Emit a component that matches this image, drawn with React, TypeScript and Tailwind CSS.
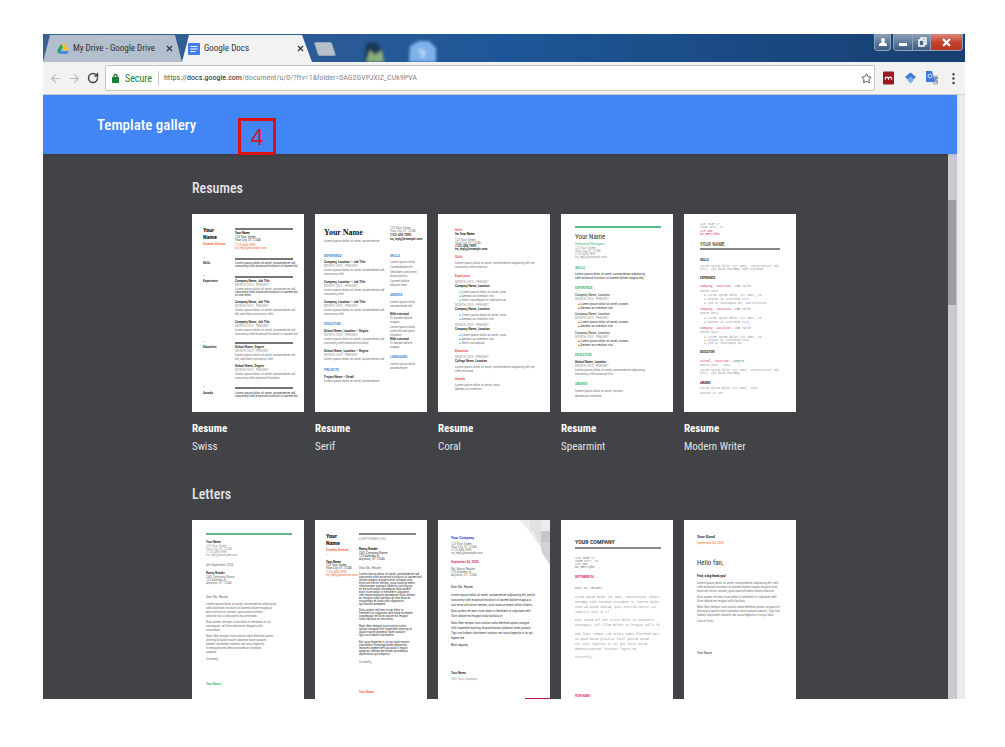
import React from 'react';
import { ArrowLeft, ArrowRight, MoreVertical, RotateCw, Star, X } from 'lucide-react';

interface Block {
  x: number;
  y: number;
  lines: string[];
  step?: number;
  size?: number;
  fill?: string;
  bold?: boolean;
  italic?: boolean;
  font?: string;
}

interface Rule {
  x: number;
  y: number;
  w: number;
  h?: number;
  fill: string;
}

interface Template {
  id: string;
  title?: string;
  style?: string;
  font?: string;
  rules?: Rule[];
  blocks: Block[];
  corner?: boolean;
}

const BODY = 'Roboto, sans-serif';
const TITLE = "'Roboto Condensed', Roboto, sans-serif";
const SERIF = "'Liberation Serif', serif";
const MONO = "'Liberation Mono', monospace";

const ORANGE = '#f4693c';
const BLUE = '#3f87d0';
const RED = '#f0575c';
const GREEN = '#3cba6e';
const PINK = '#e0336a';
const DARK = '#333333';
const GREY = '#707070';
const LIGHT = '#949494';

const ADDRESS = ['123 Your Street', 'Your City, ST 12345', '(123) 456-7890', 'no_reply@example.com'];
const READER = ['CEO, Company Name', '123 Address St', 'Anytown, ST 12345'];
const LOREM = 'Lorem ipsum dolor sit amet, consectetuer adi';
const LOREM_2 = 'nonummy nibh euismod tincidunt ut laoreet dol';
const LOREM_WIDE = 'Lorem ipsum dolor sit amet, consectetuer adipiscing elit, sed diam';
const LOREM_WIDE_2 = 'nibh euismod tincidunt ut laoreet dolore magna aliq';

const head = (x: number, y: number, text: string, fill: string): Block => ({ x, y, lines: [text], fill, bold: true });
const text = (x: number, y: number, lines: string[], fill = GREY, step = 4): Block => ({ x, y, lines, fill, step });
const bullets = (x: number, y: number, lines: string[], fill = GREY): Block => ({
  x,
  y,
  lines: lines.map((l) => '●  ' + l),
  fill,
});

const job = (x: number, y: number, title: string, body: string[]): Block[] => [
  head(x, y, title, DARK),
  text(x, y + 4, ['MONTH 20XX - PRESENT'], LIGHT),
  text(x, y + 8, body),
];

const datedJob = (x: number, y: number, title: string): Block[] => [
  text(x, y, ['MONTH 20XX - PRESENT'], LIGHT),
  head(x, y + 4, title, DARK),
];

const resumes: Template[] = [
  {
    id: 'resume-swiss',
    title: 'Resume',
    style: 'Swiss',
    rules: [14, 44, 62, 128, 173].map((y) => ({ x: 43, y, w: 58, h: 2, fill: '#777777' })),
    blocks: [
      { x: 11, y: 18, lines: ['Your', 'Name'], size: 6, step: 7, bold: true, fill: '#111111', font: TITLE },
      head(11, 31, 'Creative Director', ORANGE),
      head(43, 20, 'Your Name', '#111111'),
      text(43, 24, ADDRESS.slice(0, 2), DARK, 3),
      text(43, 32, ADDRESS.slice(2), ORANGE, 3),
      text(11, 45, ['—'], GREY),
      head(11, 50, 'Skills', DARK),
      text(43, 50, [LOREM, LOREM_2], DARK, 3),
      text(11, 63, ['—'], GREY),
      head(11, 68, 'Experience', DARK),
      ...job(43, 68, 'Company Name, Job Title', [LOREM]),
      text(43, 79, [LOREM_2, 'ut wisi enim'], DARK, 3),
      ...job(43, 89, 'Company Name, Job Title', [LOREM, 'elit, sed diam nonummy nibh']),
      ...job(43, 109, 'Company Name, Job Title', [LOREM, LOREM_2]),
      text(11, 129, ['—'], GREY),
      head(11, 134, 'Education', DARK),
      ...job(43, 134, 'School Name, Degree', [LOREM, 'elit, sed diam nonummy nibh']),
      ...job(43, 153, 'School Name, Degree', [LOREM, 'nonummy nibh euismod tincidunt']),
      text(11, 174, ['—'], GREY),
      head(11, 180, 'Awards', DARK),
      text(43, 180, [LOREM, LOREM_2], DARK, 3),
    ],
  },
  {
    id: 'resume-serif',
    title: 'Resume',
    style: 'Serif',
    blocks: [
      { x: 9, y: 21, lines: ['Your Name'], size: 8, bold: true, font: SERIF, fill: '#111111' },
      text(9, 28, ['Lorem ipsum dolor sit amet, consectetuer'], GREY),
      text(75, 15, ADDRESS.slice(0, 2), GREY, 3),
      { x: 75, y: 22, lines: ['(123) 456-7890', 'no_reply@example.com'], step: 4, bold: true, fill: DARK },
      head(9, 43, 'EXPERIENCE', BLUE),
      ...job(9, 49, 'Company, Location — Job Title', [LOREM, 'nonummy nibh']),
      ...job(9, 69, 'Company, Location — Job Title', [LOREM, 'nonummy nibh']),
      ...job(9, 89, 'Company, Location — Job Title', [LOREM, 'nonummy nibh']),
      head(9, 111, 'EDUCATION', BLUE),
      ...job(9, 118, 'School Name, Location — Degree', [LOREM, 'nonummy nibh euismod tincidunt']),
      ...job(9, 138, 'School Name, Location — Degree', [LOREM]),
      head(9, 157, 'PROJECTS', BLUE),
      head(9, 164, 'Project Name — Detail', DARK),
      text(9, 168, ['Lorem ipsum dolor sit amet, consectetuer']),
      head(75, 43, 'SKILLS', BLUE),
      text(75, 49, ['Lorem ipsum dolor']),
      text(75, 54, ['Consectetuer elit']),
      text(75, 59, ['Sed diam nonummy', 'euismod tinc']),
      text(75, 68, ['Laoreet dolore', 'aliquam erat']),
      head(75, 82, 'AWARDS', BLUE),
      text(75, 89, ['Lorem ipsum dolor', 'consectetuer elit']),
      head(75, 101, 'Nibh euismod', DARK),
      text(75, 105, ['Ut laoreet dolore', 'magna']),
      text(75, 114, ['Lorem ipsum dolor', 'amet elit sed diam', 'tincidunt']),
      head(75, 126, 'Nibh euismod', DARK),
      text(75, 130, ['Ut laoreet dolore', 'magna']),
      head(75, 144, 'LANGUAGES', BLUE),
      text(75, 151, ['Lorem ipsum dolor', 'consectetuer']),
    ],
  },
  {
    id: 'resume-coral',
    title: 'Resume',
    style: 'Coral',
    blocks: [
      head(17, 17, 'Hello', RED),
      { x: 17, y: 21, lines: ["I'm Your Name"], bold: true, fill: '#111111' },
      text(17, 27, ADDRESS.slice(0, 2), GREY, 3),
      { x: 17, y: 33, lines: ADDRESS.slice(2), step: 3, bold: true, fill: DARK },
      head(17, 44, 'Skills', RED),
      text(17, 50, [LOREM_WIDE.slice(0, 60), 'nonummy nibh euismod'], GREY),
      head(17, 63, 'Experience', RED),
      ...datedJob(17, 69, 'Company Name, Location'),
      bullets(21, 79, ['Lorem ipsum dolor sit amet, cons', 'Aenean ac interdum nisi', 'Sed in consequat mi, sed pulvinar']),
      ...datedJob(17, 92, 'Company Name, Location'),
      bullets(21, 102, ['Lorem ipsum dolor sit amet, cons', 'Aenean ac interdum nisi']),
      ...datedJob(17, 112, 'Company Name, Location'),
      bullets(21, 122, ['Lorem ipsum dolor sit amet, cons', 'Aenean ac interdum nisi', 'Sed in consequat']),
      head(17, 138, 'Education', RED),
      ...datedJob(17, 144, 'College Name, Location'),
      text(17, 154, [LOREM_WIDE.slice(0, 60), 'nibh euismod']),
      head(17, 166, 'Awards', RED),
      text(17, 172, ['Lorem ipsum dolor sit amet, cons', 'Aenean ac interdum']),
    ],
  },
  {
    id: 'resume-spearmint',
    title: 'Resume',
    style: 'Spearmint',
    rules: [{ x: 14, y: 12, w: 86, h: 2, fill: '#5fb88a' }],
    blocks: [
      { x: 14, y: 25, lines: ['Your Name'], size: 7, fill: DARK, font: TITLE },
      { x: 14, y: 31, lines: ['Industrial Designer'], fill: GREEN, size: 4, font: TITLE },
      text(14, 35, ADDRESS, LIGHT, 3),
      head(14, 55, 'SKILLS', GREEN),
      text(14, 61, ['Lorem ipsum dolor sit amet, consectetuer adipiscing', LOREM_WIDE_2], DARK),
      head(14, 75, 'EXPERIENCE', GREEN),
      head(14, 82, 'Company Name, Location', GREY),
      text(14, 86, ['MONTH 20XX - PRESENT'], LIGHT),
      bullets(17, 91, ['Lorem ipsum dolor sit amet, consec', 'Aenean ac interdum nisi'], DARK),
      head(14, 101, 'Company Name, Location', GREY),
      text(14, 105, ['MONTH 20XX - PRESENT'], LIGHT),
      bullets(17, 109, ['Lorem ipsum dolor sit amet, consec', 'Aenean ac interdum nisi'], DARK),
      head(14, 120, 'Company Name, Location', GREY),
      text(14, 124, ['MONTH 20XX - PRESENT'], LIGHT),
      bullets(17, 128, ['Lorem ipsum dolor sit amet, consec', 'Aenean ac interdum nisi'], DARK),
      head(14, 142, 'EDUCATION', GREEN),
      ...job(14, 149, 'School Name, Location', ['Lorem ipsum dolor sit amet, consectetuer adipiscing', 'nonummy nibh euismod tinc']),
      head(14, 171, 'AWARDS', GREEN),
      text(14, 178, ['Lorem ipsum dolor sit amet, consec', 'Aenean ac interdum'], GREY, 5),
    ],
  },
  {
    id: 'resume-modern-writer',
    title: 'Resume',
    style: 'Modern Writer',
    font: MONO,
    rules: [{ x: 16, y: 34, w: 80, h: 2, fill: '#888888' }],
    blocks: [
      text(16, 11, ['123 YOUR ST', 'YOUR CITY, ST'], LIGHT, 3),
      text(16, 18, ['123 456', 'NO_REPLY@EX'], PINK, 3),
      { x: 16, y: 32, lines: ['YOUR NAME'], size: 5, font: TITLE, fill: '#222222' },
      { ...head(16, 47, 'SKILLS', DARK), font: TITLE },
      text(16, 53, ['Lorem ipsum dolor sit amet, consectetuer adi', 'elit, sed diam nonummy nibh euismod'], LIGHT, 3),
      { ...head(16, 65, 'EXPERIENCE', DARK), font: TITLE },
      text(16, 73, ['Company, Location'], PINK),
      text(47, 73, ['— Job Title']),
      text(16, 78, ['MONTH 20XX'], LIGHT),
      text(20, 82, ['● Lorem ipsum dolor sit amet, co', '● Aenean ac interdum nisi', '● Sed in consequat mi, sed pulvinar'], LIGHT),
      text(16, 96, ['Company, Location'], PINK),
      text(47, 96, ['— Job Title']),
      text(16, 100, ['MONTH 20XX'], LIGHT),
      text(20, 105, ['● Lorem ipsum dolor sit amet, co', '● Aenean ac interdum nisi'], LIGHT),
      text(16, 115, ['Company, Location'], PINK),
      text(47, 115, ['— Job Title']),
      text(16, 119, ['MONTH 20XX'], LIGHT),
      text(20, 124, ['● Lorem ipsum dolor sit amet, co', '● Aenean ac interdum nisi', '● Sed in consequat mi'], LIGHT, 3),
      { ...head(16, 139, 'EDUCATION', DARK), font: TITLE },
      text(16, 148, ['School, Location'], PINK),
      text(46, 148, ['— Degree'], '#3f7f72'),
      text(16, 152, ['MONTH 20XX - 20XX'], LIGHT),
      text(16, 157, ['Lorem ipsum dolor sit amet, consectetuer adi', 'elit, sed diam nonummy'], LIGHT, 3),
      { ...head(16, 170, 'AWARDS', DARK), font: TITLE },
      text(16, 175, ['Lorem ipsum dolor sit amet, cons', 'Aenean ac int'], LIGHT, 5),
    ],
  },
];

const letters: Template[] = [
  {
    id: 'letter-spearmint',
    rules: [{ x: 14, y: 13, w: 86, h: 2, fill: '#5fb88a' }],
    blocks: [
      head(14, 23, 'Your Name', DARK),
      text(14, 27, ADDRESS, LIGHT, 3),
      text(14, 46, ['4th September 20XX']),
      head(14, 54, 'Ronny Reader', DARK),
      text(14, 58, READER, GREY, 3),
      text(14, 78, ['Dear Ms. Reader,']),
      text(14, 85, ['Lorem ipsum dolor sit amet, consectetuer adipiscing', 'nibh euismod tincidunt ut laoreet dolore magna al', 'enim ad minim veniam, quis nostrud exerci', 'lobortis nisl ut aliquip ex ea commodo']),
      text(14, 103, ['Duis autem vel eum iriure dolor in hendrerit in vul', 'consequat, vel illum dolore eu feugiat nulla', 'accumsan']),
      text(14, 117, ['Nam liber tempor cum soluta nobis eleifend option', 'doming id quod mazim placerat facer possim', 'habent claritatem insitam; est usus legentis', 'Investigationes demonstraverunt lectores', 'saepius']),
      text(14, 140, ['Sincerely,']),
      head(14, 165, 'Your Name', GREEN),
    ],
  },
  {
    id: 'letter-swiss',
    rules: [{ x: 44, y: 13, w: 57, h: 2, fill: '#888888' }],
    blocks: [
      { x: 11, y: 18, lines: ['Your', 'Name'], size: 6, step: 7, bold: true, fill: '#111111', font: TITLE },
      head(11, 31, 'Creative Director', ORANGE),
      text(11, 36, ['—']),
      head(11, 43, 'Your Name', '#111111'),
      text(11, 46, ADDRESS.slice(0, 2), DARK, 3),
      text(11, 53, ADDRESS.slice(2), ORANGE, 3),
      text(44, 20, ['4 SEPTEMBER 20XX'], LIGHT),
      head(44, 30, 'Ronny Reader', '#111111'),
      text(44, 34, READER, DARK, 3),
      text(44, 49, ['Dear Ms. Reader,']),
      text(44, 55, [LOREM, LOREM_2, 'dolore magna aliquam erat volutpat wisi', 'enim ad minim veniam, quis nostrud exerc', 'ullamcorper suscipit lobortis nisl aliquip', 'ex ea commodo consequat duis autem', 'eum iriure dolor in hendrerit vulputate', 'velit esse molestie consequat illum dolore', 'eu feugiat nulla facilisis at vero eros et', 'accumsan et iusto odio dignissim', 'qui blandit praesent'], DARK, 3),
      text(44, 91, ['Duis autem vel eum iriure dolor in', 'hendrerit in vulputate velit esse molestie', 'consequat vel illum dolore eu feugiat', 'nulla facilisis at vero eros'], DARK, 3),
      text(44, 107, ['Nam liber tempor cum soluta nobis', 'option congue nihil imperdiet doming id', 'quod mazim placerat facer possim', 'typi non habent claritatem'], DARK, 3),
      text(44, 123, ['Est usus legentis in iis qui facit eorum', 'claritatem investigationes demonstr', 'lectores legere me lius quod ii legunt', 'saepius claritas est etiam processus', 'dynamicus qui sequitur'], DARK, 3),
      text(44, 143, ['Sincerely,']),
      head(44, 173, 'Your Name', ORANGE),
    ],
  },
  {
    id: 'letter-geometric',
    corner: true,
    rules: [{ x: 87, y: 178, w: 25, h: 2, fill: '#c2185b' }],
    blocks: [
      { x: 13, y: 19, lines: ['Your Company'], size: 4, bold: true, fill: '#4a4ae0', font: TITLE },
      text(13, 25, ADDRESS, GREY, 3),
      head(13, 43, 'September 04, 20XX', PINK),
      text(13, 50, ['Ms. Ronny Reader', '123 Address St', 'Anytown, ST 12345'], GREY, 3),
      text(13, 68, ['Dear Ms. Reader,'], DARK),
      text(13, 76, ['Lorem ipsum dolor sit amet, consectetuer adipiscing elit, sed di', 'nonummy nibh euismod tincidunt ut laoreet dolore magna al', 'wisi enim ad minim veniam, quis nostrud exerci tation ullamc'], DARK, 5),
      text(13, 92, ['Duis autem vel eum iriure dolor in hendrerit in vulputate velit', 'illum dolore eu feugiat nulla facilisis at'], DARK, 5),
      text(13, 104, ['Nam liber tempor cum soluta nobis eleifend option congue', 'nihil imperdiet doming id quod mazim placerat facer possim', 'Typi non habent claritatem insitam; est usus legentis in iis qui', 'legere me'], DARK, 5),
      text(13, 126, ['Best regards,'], DARK),
      head(13, 154, 'Your Name', DARK),
      text(13, 160, ['CEO, Your Company'], LIGHT),
    ],
  },
  {
    id: 'letter-modern-writer',
    font: MONO,
    rules: [{ x: 14, y: 27, w: 86, h: 2, fill: '#888888' }],
    blocks: [
      { x: 14, y: 24, lines: ['YOUR COMPANY'], size: 6, font: TITLE, bold: true, fill: '#444444' },
      text(14, 39, ['123 YOUR ST', 'YOUR CITY, ST', '123 456', 'NO_REPLY@EX'], GREY, 3),
      { ...head(14, 58, 'SEPTEMBER 04', PINK), font: TITLE },
      text(14, 69, ['Dear Ms. Reader,'], GREY),
      text(14, 78, ['Lorem ipsum dolor sit amet, consectetuer adipis', 'nonummy nibh euismod tincidunt ut laoreet dolor', 'enim ad minim veniam, quis nostrud exerci tat', 'lobortis nisl ut al'], LIGHT, 5),
      text(14, 101, ['Duis autem vel eum iriure dolor in hendrerit', 'consequat, vel illum dolore eu feugiat nulla fa'], LIGHT, 5),
      text(14, 115, ['Nam liber tempor cum soluta nobis eleifend opti', 'id quod mazim placerat facer possim assum', 'est usus legentis in iis qui facit eorum', 'demonstraverunt lectores legere me'], LIGHT, 5),
      text(14, 138, ['Sincerely,'], LIGHT),
      { ...head(14, 177, 'YOUR NAME', PINK), font: TITLE },
    ],
  },
  {
    id: 'letter-playful',
    blocks: [
      { x: 13, y: 18, lines: ['Your Band'], size: 4, bold: true, italic: true, font: SERIF, fill: '#111111' },
      text(13, 24, ['September 04, 20XX'], ORANGE),
      { x: 13, y: 45, lines: ['Hello fan,'], size: 7, fill: DARK, font: TITLE },
      { x: 13, y: 57, lines: ['First, a big thank you!'], bold: true, fill: '#111111' },
      text(13, 64, ['Lorem ipsum dolor sit amet, consectetuer adipiscing elit, sed', 'nibh euismod tincidunt ut laoreet dolore magna aliquam erat', 'enim ad minim veniam, quis nostrud exerci tation ullamco']),
      text(13, 78, ['Duis autem vel eum iriure dolor in hendrerit in vulputate velit', 'illum dolore eu feugiat nulla facilisis']),
      text(13, 88, ['Nam liber tempor cum soluta nobis eleifend option congue nih', 'doming id quod mazim placerat facer possim assum. Typi non', 'habent claritatem insitam; est usus legentis in iis qui facit']),
      text(13, 102, ['Lots of love,']),
      text(13, 134, ['Your Name'], DARK),
    ],
  },
];

const Thumbnail: React.FC<{ template: Template }> = ({ template }) => (
  <svg viewBox="0 0 112 198" className="block w-full bg-white">
    {template.corner && (
      <g>
        <path d="M82 0H112V45L104 34V28L98 22L92 12Z" fill="#ececec" />
        <path d="M92 0H103V11H92Z" fill="#e2e2e2" />
        <path d="M96 11H103V26Z" fill="#dedede" />
        <path d="M103 11H112V45L103 30Z" fill="#d2d2d2" />
        <path d="M103 11H112V22H103Z" fill="#c6c6c6" />
      </g>
    )}
    {template.rules?.map((r, i) => (
      <rect key={i} x={r.x} y={r.y} width={r.w} height={r.h ?? 1} fill={r.fill} />
    ))}
    {template.blocks.map((b, i) => (
      <text
        key={i}
        fill={b.fill ?? GREY}
        fontSize={b.size ?? 3}
        fontWeight={b.bold ? 700 : 400}
        fontStyle={b.italic ? 'italic' : 'normal'}
        fontFamily={b.font ?? template.font ?? BODY}
      >
        {b.lines.map((line, n) => (
          <tspan key={n} x={b.x} y={b.y + n * (b.step ?? 4)}>
            {line}
          </tspan>
        ))}
      </text>
    ))}
  </svg>
);

const TemplateCard: React.FC<{ template: Template }> = ({ template }) => (
  <a href="#" className="block text-[11px] leading-[18px] text-[#e2e2e4]">
    <Thumbnail template={template} />
    {template.title && <span className="block pt-2 font-bold text-white">{template.title}</span>}
    {template.style && <span className="block">{template.style}</span>}
  </a>
);

const Section: React.FC<{ name: string; templates: Template[] }> = ({ name, templates }) => (
  <section className="mb-7">
    <h2 className="mb-4 text-[14px] leading-5 font-medium text-[#e6e6e8]">{name}</h2>
    <div className="grid grid-cols-[repeat(5,112px)] gap-[11px]">
      {templates.map((t) => (
        <TemplateCard key={t.id} template={t} />
      ))}
    </div>
  </section>
);

const DriveIcon = () => (
  <svg viewBox="0 0 12 12" className="size-3 shrink-0">
    <path d="M4 1h4l4 7H8z" fill="#fbc02d" />
    <path d="M4 1 0 8l2 3 4-7z" fill="#1fa463" />
    <path d="M4 8h8l-2 3H2z" fill="#4285f4" />
  </svg>
);

const DocsIcon = () => (
  <svg viewBox="0 0 12 12" className="size-3 shrink-0">
    <rect width="12" height="12" rx="1" fill="#3f7ff0" />
    <path d="M2.500 3.500h7M2.500 6h7M2.500 8.500h5" stroke="#fff" strokeWidth="1.200" />
  </svg>
);

const TabStrip = () => (
  <div className="relative flex h-7 shrink-0 items-end bg-gradient-to-r from-[#3b6190] via-[#1d5698] to-[#173f70]">
    <div className="flex h-[27px] w-[139px] items-center gap-1 bg-[#b3bfcd] pr-2 pl-[14px] text-[9px] text-[#333] [clip-path:polygon(7px_0,132px_0,100%_100%,0_100%)]">
      <DriveIcon />
      <span className="grow whitespace-nowrap">My Drive - Google Drive</span>
      <button aria-label="Close My Drive tab">
        <X className="size-[9px]" strokeWidth={3} />
      </button>
    </div>
    <div className="flex h-[27px] w-[130px] items-center gap-1 bg-[#f2f2f2] pr-[7px] pl-[6px] text-[9px] text-[#333] [clip-path:polygon(7px_0,120px_0,100%_100%,0_100%)]">
      <DocsIcon />
      <span className="grow whitespace-nowrap">Google Docs</span>
      <button aria-label="Close Google Docs tab">
        <X className="size-[9px]" strokeWidth={3} />
      </button>
    </div>
    <button aria-label="New tab" className="mb-[6px] ml-1 h-[14px] w-[18px] skew-x-[18deg] rounded-xs border border-[#90a5bc] bg-[#b6c0ca]" />
    <svg viewBox="0 0 84 26" className="ml-6 h-[26px] w-[84px]">
      <defs>
        <filter id="soft">
          <feGaussianBlur stdDeviation="1.500" />
        </filter>
      </defs>
      <g filter="url(#soft)">
        <path d="M8 7l10-1 3 5 4 3-3 12H6z" fill="#1b3858" />
        <path d="M8 26l4-12 5 5 7-5 2 12z" fill="#8caf78" />
        <path d="M51 26l1-16 9-5h10l7 7v14z" fill="#7fb2ea" />
        <path d="M60 12l8 3-3 8z" fill="#b7d7f8" />
      </g>
    </svg>
    <div className="absolute top-0 right-[2px] flex gap-[2px] text-white">
      <button aria-label="Profile" className="flex h-[17px] w-[17px] items-center justify-center rounded-b border border-t-0 border-[#8fa5bd] bg-gradient-to-b from-[#8ba0b7] to-[#3d5c80]">
        <svg viewBox="0 0 10 10" className="size-[10px]" fill="#fff">
          <circle cx="5" cy="3" r="2" />
          <path d="M1 9V7l3-2h2l3 2v2z" />
        </svg>
      </button>
      <div className="flex h-[17px] overflow-hidden rounded-b border border-t-0 border-[#8fa5bd]">
        <button aria-label="Minimize" className="flex w-[18px] items-center justify-center bg-gradient-to-b from-[#8ba0b7] to-[#3d5c80]">
          <svg viewBox="0 0 10 10" className="size-[10px]">
            <rect x="1" y="6" width="8" height="3" fill="#fff" />
          </svg>
        </button>
        <button aria-label="Restore" className="flex w-[18px] items-center justify-center border-l border-[#8fa5bd] bg-gradient-to-b from-[#8ba0b7] to-[#3d5c80]">
          <svg viewBox="0 0 10 10" className="size-[10px]" fill="#4a6789" stroke="#fff" strokeWidth="1.500">
            <path d="M4 1h5v6H4z" />
            <path d="M2 3h5v6H2z" />
          </svg>
        </button>
        <button aria-label="Close" className="flex w-8 items-center justify-center border-l border-[#8fa5bd] bg-gradient-to-b from-[#d9897c] via-[#c5432f] to-[#b8361f]">
          <X className="size-[11px]" strokeWidth={5} />
        </button>
      </div>
    </div>
  </div>
);

const Toolbar = () => (
  <div className="flex h-[33px] shrink-0 items-center border-b border-[#cfcfcf] bg-[#f2f2f2] text-[#444]">
    <button aria-label="Back" className="ml-[6px]">
      <ArrowLeft className="size-[13px] text-[#bbb]" />
    </button>
    <button aria-label="Forward" className="ml-[6px]">
      <ArrowRight className="size-[13px] text-[#bbb]" />
    </button>
    <button aria-label="Reload" className="ml-[6px]">
      <RotateCw className="size-3" strokeWidth={3} />
    </button>
    <div className="ml-[6px] flex h-[26px] grow items-center rounded-xs border border-[#c4c4c4] bg-white pl-[6px] text-[10px]">
      <svg viewBox="0 0 7 10" className="h-[10px] w-[7px]">
        <path d="M2 5V3q0-1.500 1.500-1.500T5 3v2" fill="none" stroke="#188038" strokeWidth="1.300" />
        <rect x="0" y="4" width="7" height="6" rx="0.500" fill="#188038" />
      </svg>
      <span className="ml-[6px] border-r border-[#ccc] pr-[6px] text-[#188038]">Secure</span>
      <span className="ml-[5px] grow text-[8px] whitespace-nowrap text-[#888]">
        <span className="text-[#555]">https://</span>
        <span className="text-[#222]">docs.google.com</span>/document/u/0/?ftv=1&amp;folder=0AG2GVPJXIZ_CUk9PVA
      </span>
    </div>
    <button aria-label="Bookmark" className="-ml-[14px]">
      <Star className="size-[11px]" />
    </button>
    <button aria-label="Mendeley" className="ml-[11px]">
      <svg viewBox="0 0 12 14" className="h-[14px] w-[11px]">
        <rect width="12" height="14" rx="1" fill="#981b22" />
        <path d="M2.500 9V7.500q0-1.500 1.500-1.500t2 1.500q.5-1.500 2-1.500t1.500 1.500V9M6 7v2" fill="none" stroke="#fff" strokeWidth="1.200" />
      </svg>
    </button>
    <button aria-label="Scholar" className="ml-[11px]">
      <svg viewBox="0 0 12 14" className="h-[14px] w-[11px]">
        <path d="M6 1l6 5-6 5-6-5z" fill="#3c7ad6" />
        <path d="M3 8l3-3 3 3v2l-3 3-3-3z" fill="#7fadf0" />
      </svg>
    </button>
    <button aria-label="Translate" className="ml-[10px]">
      <svg viewBox="0 0 12 14" className="h-[14px] w-3">
        <path d="M5 4h7v10H7z" fill="#c3c9d2" />
        <path d="M0 0h6l3 11H0z" fill="#3d78db" />
        <circle cx="4" cy="5" r="2" fill="none" stroke="#cfe0ff" />
        <path d="M8 7h4M10 6v1q0 3-2 4M9 8l3 4" stroke="#6a7f9e" fill="none" />
      </svg>
    </button>
    <button aria-label="Menu" className="mr-1 ml-2">
      <MoreVertical className="size-[15px]" />
    </button>
  </div>
);

export default function App() {
  return (
    <div className="h-screen overflow-hidden bg-white pt-[34px] pr-10 pb-12 pl-[43px] font-['Roboto_Condensed','Roboto',sans-serif]">
      <div className="flex h-full flex-col overflow-hidden">
        <TabStrip />
        <Toolbar />
        <div className="flex min-h-0 grow">
          <div className="flex min-w-0 grow flex-col">
            <header className="relative z-10 flex h-[59px] shrink-0 items-center bg-[#4285f4] pl-[54px] shadow">
              <h1 className="text-[15px] leading-6 font-medium text-white">Template gallery</h1>
              <div className="absolute bottom-[-1px] left-[195px] flex h-[37px] w-[38px] items-center justify-center border-[3px] border-[#e01010] font-['Noto_Sans'] text-[22px] text-[#d8102a]">
                4
              </div>
            </header>
            <div className="flex min-h-0 grow">
              <main className="min-w-0 grow overflow-hidden bg-[#424347] pt-6">
                <div className="mx-auto max-w-[607px]">
                  <Section name="Resumes" templates={resumes} />
                  <Section name="Letters" templates={letters} />
                </div>
              </main>
              <div className="w-[9px] shrink-0 border-r border-[#bcc3da] bg-[#cacacd] pt-[46px]">
                <div className="h-[105px] bg-[#9e9e9f]" />
              </div>
            </div>
          </div>
          <div className="w-2 shrink-0 bg-[#eaebef]" />
        </div>
      </div>
    </div>
  );
}
